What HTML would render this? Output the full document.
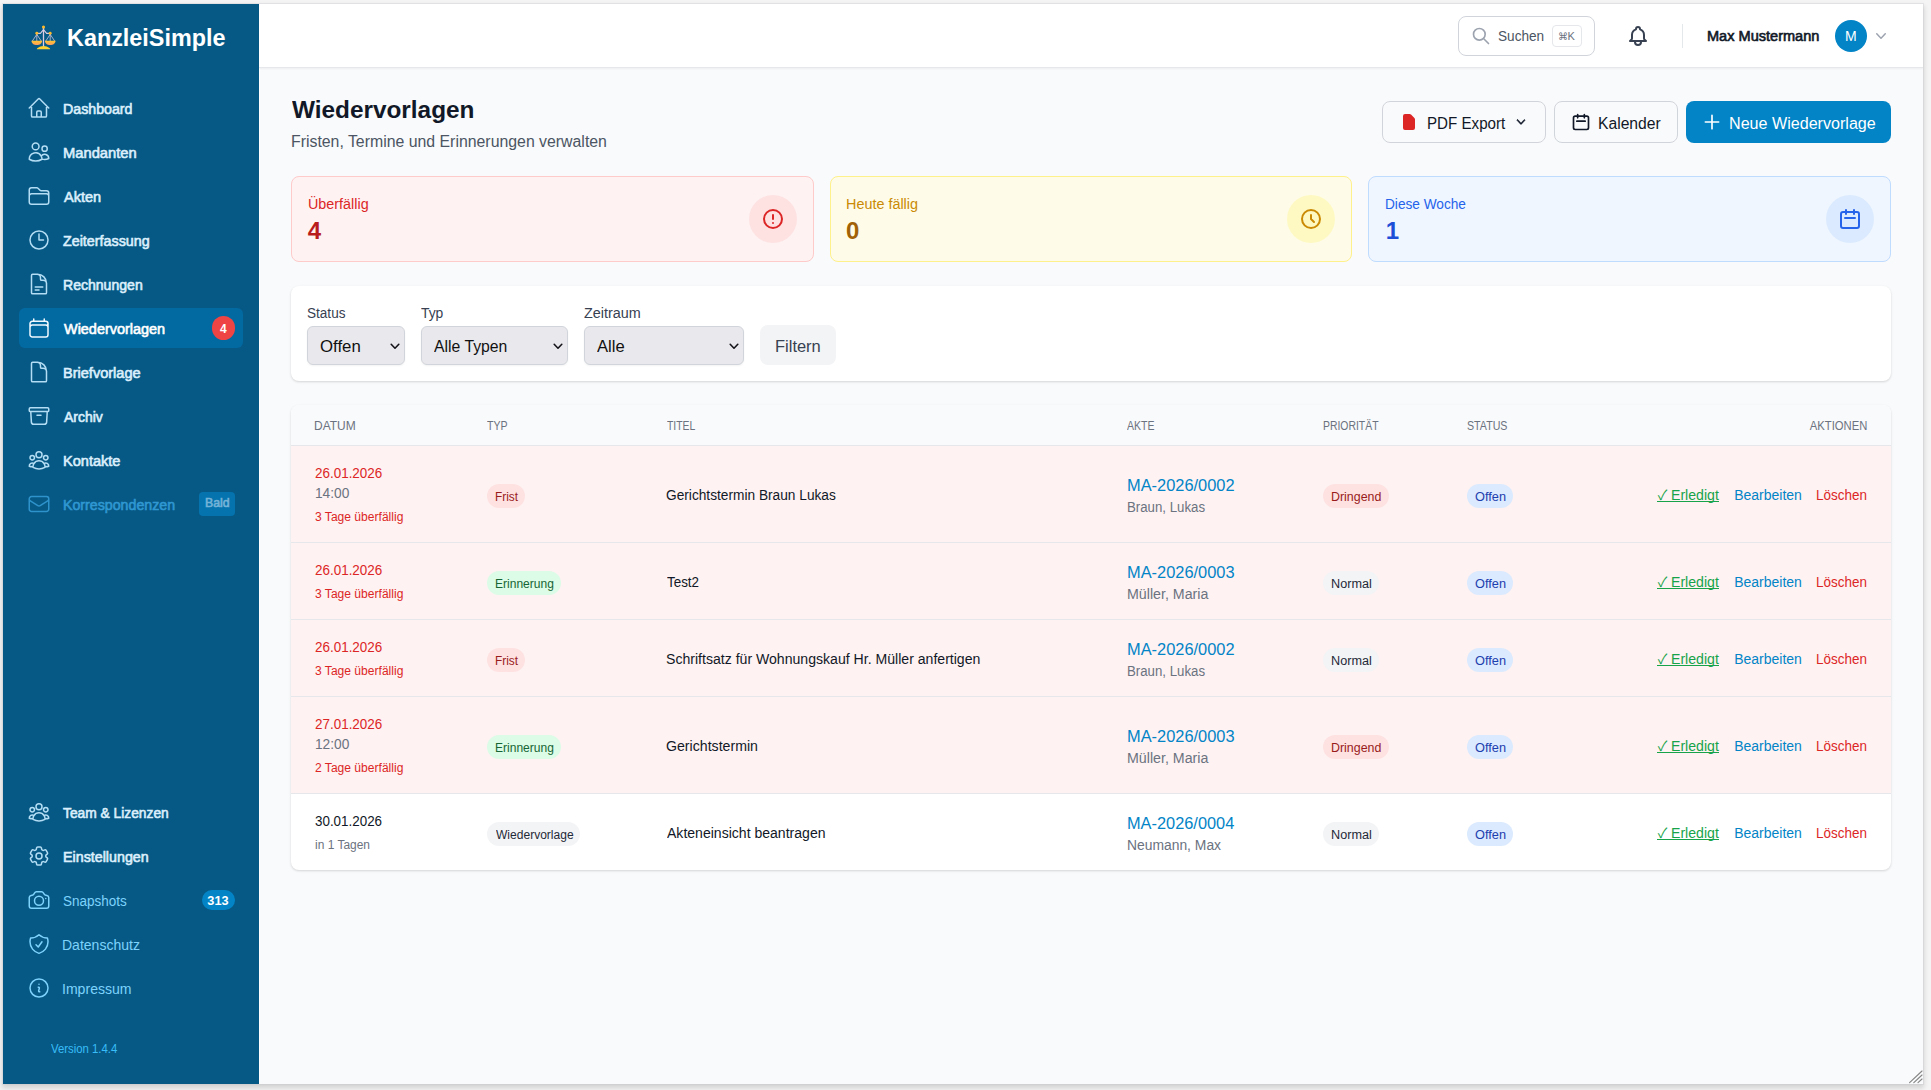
<!DOCTYPE html>
<html lang="de"><head><meta charset="utf-8"><title>Wiedervorlagen – KanzleiSimple</title>
<style>
*{box-sizing:border-box;margin:0;padding:0}
html,body{width:1931px;height:1090px;overflow:hidden}
body{background:#f4f4f4;font-family:"Liberation Sans",Arial,sans-serif;position:relative}
#frame{position:absolute;left:3px;top:4px;width:1920px;height:1080px;background:#f9fafb;overflow:hidden;
  box-shadow:0 0 0 1px rgba(200,200,205,.35),0 3px 5px 1px rgba(0,0,0,.14)}
#frame div,#frame span,#frame svg,#frame aside,#frame header,#frame main,#frame a,#frame nav,#frame section,#frame kbd{position:absolute}
.t{white-space:nowrap;display:block}
.ic{display:block;overflow:visible}
aside{background:#075985}
header{background:#fff;border-bottom:1px solid #e5e7eb;box-shadow:0 1px 2px rgba(0,0,0,.05)}
.card{border-radius:8px}
.white{background:#fff;box-shadow:0 1px 3px rgba(0,0,0,.1),0 1px 2px rgba(0,0,0,.06)}
.badge{border-radius:9999px}
.sel{background:#e9e9ed;border:1px solid #d1d5db;border-radius:6px;box-shadow:0 1px 2px rgba(0,0,0,.05)}
.btn{border-radius:8px}
kbd{font-family:inherit}
a{color:inherit;text-decoration:none}
</style></head>
<body>
<div id="frame">
<aside style="left:0;top:0;width:256px;height:1080px"></aside>
<div style="left:256px;top:0;width:1px;height:1080px;background:#fff"></div>
<nav><svg class="ic" style="left:23px;top:16px" width="36" height="34" viewBox="26 20 36 34"><defs><linearGradient id="pan" x1="0" y1="0" x2="0" y2="1"><stop offset="0" stop-color="#fdc82c"/><stop offset="1" stop-color="#fd9a62"/></linearGradient></defs><g stroke="#dccbe2" stroke-linecap="round" stroke-linejoin="round" fill="none"><path d="M43.5 28.2V46" stroke-width="1.3"/><path d="M37.6 33.4H40.4L43.5 29.6 46.6 33.4H49.4" stroke-width="1.1"/><path d="M36.8 34.4 32.5 40.8M36.8 34.4V40.8M36.8 34.4 41.1 40.8M50.2 34.4 45.9 40.8M50.2 34.4V40.8M50.2 34.4 54.5 40.8" stroke-width=".8" stroke="#cfc3dc"/></g><circle cx="43.5" cy="27" r="1.55" fill="#fdb92a"/><circle cx="36.8" cy="33.3" r="1.45" fill="#fdb92a"/><circle cx="50.2" cy="33.3" r="1.45" fill="#fdb92a"/><path d="M31.5 40.7h10.6c0 2.6-2.4 4.4-5.3 4.4s-5.3-1.8-5.3-4.4Z" fill="url(#pan)"/><path d="M44.9 40.7h10.6c0 2.6-2.4 4.4-5.3 4.4s-5.3-1.8-5.3-4.4Z" fill="url(#pan)"/><path d="M36.8 49.3c0-.5.3-.9.8-1.2 1.700-1.400 3.600-2.200 5.900-2.200s4.200.8 5.900 2.200c.5.3.8.7.8 1.200Z" fill="#fdd12f"/></svg>
<span id="t1" class="t" style="top:18.00px;font-size:24px;line-height:32px;color:#ffffff;font-weight:700;left:64.04px;transform:scaleX(0.9738);transform-origin:0 50%;">KanzleiSimple</span>
<svg class="ic" style="left:24px;top:92px;color:#b3ddf4;" width="24" height="24" viewBox="0 0 24 24" fill="none" stroke="currentColor" stroke-width="1.5" stroke-linecap="round" stroke-linejoin="round"><path d="m2.25 12 8.954-8.955c.44-.439 1.152-.439 1.591 0L21.75 12M4.5 9.75v10.125c0 .621.504 1.125 1.125 1.125H9.75v-4.875c0-.621.504-1.125 1.125-1.125h2.25c.621 0 1.125.504 1.125 1.125V21h4.125c.621 0 1.125-.504 1.125-1.125V9.75M8.25 21h8.25"/></svg>
<span id="t2" class="t" style="top:95.00px;font-size:14px;line-height:20px;color:#dbeffc;-webkit-text-stroke:.6px;left:59.64px;transform:scaleX(1.0141);transform-origin:0 50%;">Dashboard</span>
<svg class="ic" style="left:24px;top:136px;color:#b3ddf4;" width="24" height="24" viewBox="0 0 24 24" fill="none" stroke="currentColor" stroke-width="1.5" stroke-linecap="round" stroke-linejoin="round"><path d="M15 19.128a9.38 9.38 0 0 0 2.625.372 9.337 9.337 0 0 0 4.121-.952 4.125 4.125 0 0 0-7.533-2.493M15 19.128v-.003c0-1.113-.285-2.16-.786-3.07M15 19.128v.106A12.318 12.318 0 0 1 8.624 21c-2.331 0-4.512-.645-6.374-1.766l-.001-.109a6.375 6.375 0 0 1 11.964-3.07M12 6.375a3.375 3.375 0 1 1-6.75 0 3.375 3.375 0 0 1 6.75 0Zm8.25 2.25a2.625 2.625 0 1 1-5.25 0 2.625 2.625 0 0 1 5.25 0Z"/></svg>
<span id="t3" class="t" style="top:139.00px;font-size:14px;line-height:20px;color:#dbeffc;-webkit-text-stroke:.6px;left:59.61px;transform:scaleX(1.0516);transform-origin:0 50%;">Mandanten</span>
<svg class="ic" style="left:24px;top:180px;color:#b3ddf4;" width="24" height="24" viewBox="0 0 24 24" fill="none" stroke="currentColor" stroke-width="1.5" stroke-linecap="round" stroke-linejoin="round"><path d="M2.25 12.75V12A2.25 2.25 0 0 1 4.5 9.75h15A2.25 2.25 0 0 1 21.75 12v.75m-8.69-6.44-2.12-2.12a1.5 1.5 0 0 0-1.061-.44H4.5A2.25 2.25 0 0 0 2.25 6v12a2.25 2.25 0 0 0 2.25 2.25h15A2.25 2.25 0 0 0 21.75 18V9a2.25 2.25 0 0 0-2.25-2.25h-5.379a1.5 1.5 0 0 1-1.06-.44Z"/></svg>
<span id="t4" class="t" style="top:183.00px;font-size:14px;line-height:20px;color:#dbeffc;-webkit-text-stroke:.6px;left:60.66px;transform:scaleX(1.0366);transform-origin:0 50%;">Akten</span>
<svg class="ic" style="left:24px;top:224px;color:#b3ddf4;" width="24" height="24" viewBox="0 0 24 24" fill="none" stroke="currentColor" stroke-width="1.5" stroke-linecap="round" stroke-linejoin="round"><path d="M12 6v6h4.5m4.5 0a9 9 0 1 1-18 0 9 9 0 0 1 18 0Z"/></svg>
<span id="t5" class="t" style="top:227.00px;font-size:14px;line-height:20px;color:#dbeffc;-webkit-text-stroke:.6px;left:60.14px;transform:scaleX(1.0214);transform-origin:0 50%;">Zeiterfassung</span>
<svg class="ic" style="left:24px;top:268px;color:#b3ddf4;" width="24" height="24" viewBox="0 0 24 24" fill="none" stroke="currentColor" stroke-width="1.5" stroke-linecap="round" stroke-linejoin="round"><path d="M19.5 14.25v-2.625a3.375 3.375 0 0 0-3.375-3.375h-1.5A1.125 1.125 0 0 1 13.5 7.125v-1.5a3.375 3.375 0 0 0-3.375-3.375H8.25m0 12.75h7.5m-7.5 3H12M10.5 2.25H5.625c-.621 0-1.125.504-1.125 1.125v17.25c0 .621.504 1.125 1.125 1.125h12.75c.621 0 1.125-.504 1.125-1.125V11.25a9 9 0 0 0-9-9Z"/></svg>
<span id="t6" class="t" style="top:271.00px;font-size:14px;line-height:20px;color:#dbeffc;-webkit-text-stroke:.6px;left:59.65px;transform:scaleX(1.0038);transform-origin:0 50%;">Rechnungen</span>
<div style="left:16px;top:304px;width:224px;height:40px;background:#0369a1;border-radius:6px"></div>
<svg class="ic" style="left:24px;top:312px;color:#f0f9ff;" width="24" height="24" viewBox="0 0 24 24" fill="none" stroke="currentColor" stroke-width="1.5" stroke-linecap="round" stroke-linejoin="round"><path d="M6.75 3v2.25M17.25 3v2.25M3 18.75V7.5a2.25 2.25 0 0 1 2.25-2.25h13.5A2.25 2.25 0 0 1 21 7.5v11.25m-18 0A2.25 2.25 0 0 0 5.25 21h13.5A2.25 2.25 0 0 0 21 18.75m-18 0v-7.5A2.25 2.25 0 0 1 5.25 9h13.5A2.25 2.25 0 0 1 21 11.25v7.5"/></svg>
<span id="t7" class="t" style="top:315.00px;font-size:14px;line-height:20px;color:#ffffff;-webkit-text-stroke:.6px;left:60.66px;transform:scaleX(1.0312);transform-origin:0 50%;">Wiedervorlagen</span>
<svg class="ic" style="left:24px;top:356px;color:#b3ddf4;" width="24" height="24" viewBox="0 0 24 24" fill="none" stroke="currentColor" stroke-width="1.5" stroke-linecap="round" stroke-linejoin="round"><path d="M19.5 14.25v-2.625a3.375 3.375 0 0 0-3.375-3.375h-1.5A1.125 1.125 0 0 1 13.5 7.125v-1.5a3.375 3.375 0 0 0-3.375-3.375H8.25m2.25 0H5.625c-.621 0-1.125.504-1.125 1.125v17.25c0 .621.504 1.125 1.125 1.125h12.75c.621 0 1.125-.504 1.125-1.125V11.25a9 9 0 0 0-9-9Z"/></svg>
<span id="t8" class="t" style="top:359.00px;font-size:14px;line-height:20px;color:#dbeffc;-webkit-text-stroke:.6px;left:59.62px;transform:scaleX(1.0386);transform-origin:0 50%;">Briefvorlage</span>
<svg class="ic" style="left:24px;top:400px;color:#b3ddf4;" width="24" height="24" viewBox="0 0 24 24" fill="none" stroke="currentColor" stroke-width="1.5" stroke-linecap="round" stroke-linejoin="round"><path d="m20.25 7.5-.625 10.632a2.25 2.25 0 0 1-2.247 2.118H6.622a2.25 2.25 0 0 1-2.247-2.118L3.75 7.5M10 11.25h4M3.375 7.5h17.25c.621 0 1.125-.504 1.125-1.125v-1.5c0-.621-.504-1.125-1.125-1.125H3.375c-.621 0-1.125.504-1.125 1.125v1.5c0 .621.504 1.125 1.125 1.125Z"/></svg>
<span id="t9" class="t" style="top:403.00px;font-size:14px;line-height:20px;color:#dbeffc;-webkit-text-stroke:.6px;left:60.65px;transform:scaleX(0.9949);transform-origin:0 50%;">Archiv</span>
<svg class="ic" style="left:24px;top:444px;color:#b3ddf4;" width="24" height="24" viewBox="0 0 24 24" fill="none" stroke="currentColor" stroke-width="1.5" stroke-linecap="round" stroke-linejoin="round"><path d="M18 18.72a9.094 9.094 0 0 0 3.741-.479 3 3 0 0 0-4.682-2.72m.94 3.198.001.031c0 .225-.012.447-.037.666A11.944 11.944 0 0 1 12 21c-2.17 0-4.207-.576-5.963-1.584A6.062 6.062 0 0 1 6 18.719m12 0a5.971 5.971 0 0 0-.941-3.197m0 0A5.995 5.995 0 0 0 12 12.75a5.995 5.995 0 0 0-5.058 2.772m0 0a3 3 0 0 0-4.681 2.72 8.986 8.986 0 0 0 3.74.477m.94-3.197a5.971 5.971 0 0 0-.94 3.197M15 6.75a3 3 0 1 1-6 0 3 3 0 0 1 6 0Zm6 3a2.25 2.25 0 1 1-4.5 0 2.25 2.25 0 0 1 4.5 0Zm-13.5 0a2.25 2.25 0 1 1-4.5 0 2.25 2.25 0 0 1 4.5 0Z"/></svg>
<span id="t10" class="t" style="top:447.00px;font-size:14px;line-height:20px;color:#dbeffc;-webkit-text-stroke:.6px;left:59.62px;transform:scaleX(1.0396);transform-origin:0 50%;">Kontakte</span>
<div class="badge" style="left:209px;top:312px;width:23px;height:24px;background:#ef4444"></div>
<span id="t11" class="t" style="top:317.00px;font-size:12px;line-height:16px;color:#ffffff;font-weight:700;left:220.34px;width:200px;margin-left:-100px;text-align:center;">4</span>
<svg class="ic" style="left:24px;top:488px;color:#2f93cb;" width="24" height="24" viewBox="0 0 24 24" fill="none" stroke="currentColor" stroke-width="1.5" stroke-linecap="round" stroke-linejoin="round"><path d="M21.75 6.75v10.5a2.25 2.25 0 0 1-2.25 2.25h-15a2.25 2.25 0 0 1-2.25-2.25V6.75m19.5 0A2.25 2.25 0 0 0 19.5 4.5h-15a2.25 2.25 0 0 0-2.25 2.25m19.5 0v.243a2.25 2.25 0 0 1-1.07 1.916l-7.5 4.615a2.25 2.25 0 0 1-2.36 0L3.32 8.91a2.25 2.25 0 0 1-1.07-1.916V6.75"/></svg>
<span id="t12" class="t" style="top:491.00px;font-size:14px;line-height:20px;color:#2f97d1;-webkit-text-stroke:.6px;left:59.84px;transform:scaleX(1.0142);transform-origin:0 50%;">Korrespondenzen</span>
<div style="left:196px;top:488px;width:36px;height:24px;background:#0573ae;border-radius:4px"></div>
<span id="t13" class="t" style="top:491.00px;font-size:12px;line-height:16px;color:#74b3d8;-webkit-text-stroke:.6px;left:201.73px;transform:scaleX(1.0242);transform-origin:0 50%;">Bald</span>
<svg class="ic" style="left:24px;top:796px;color:#b3ddf4;" width="24" height="24" viewBox="0 0 24 24" fill="none" stroke="currentColor" stroke-width="1.5" stroke-linecap="round" stroke-linejoin="round"><path d="M18 18.72a9.094 9.094 0 0 0 3.741-.479 3 3 0 0 0-4.682-2.72m.94 3.198.001.031c0 .225-.012.447-.037.666A11.944 11.944 0 0 1 12 21c-2.17 0-4.207-.576-5.963-1.584A6.062 6.062 0 0 1 6 18.719m12 0a5.971 5.971 0 0 0-.941-3.197m0 0A5.995 5.995 0 0 0 12 12.75a5.995 5.995 0 0 0-5.058 2.772m0 0a3 3 0 0 0-4.681 2.72 8.986 8.986 0 0 0 3.74.477m.94-3.197a5.971 5.971 0 0 0-.94 3.197M15 6.75a3 3 0 1 1-6 0 3 3 0 0 1 6 0Zm6 3a2.25 2.25 0 1 1-4.5 0 2.25 2.25 0 0 1 4.5 0Zm-13.5 0a2.25 2.25 0 1 1-4.5 0 2.25 2.25 0 0 1 4.5 0Z"/></svg>
<span id="t14" class="t" style="top:799.00px;font-size:14px;line-height:20px;color:#dbeffc;-webkit-text-stroke:.6px;left:60.40px;transform:scaleX(0.9845);transform-origin:0 50%;">Team &amp; Lizenzen</span>
<svg class="ic" style="left:24px;top:840px;color:#b3ddf4;" width="24" height="24" viewBox="0 0 24 24" fill="none" stroke="currentColor" stroke-width="1.5" stroke-linecap="round" stroke-linejoin="round"><path d="M9.594 3.94c.09-.542.56-.94 1.11-.94h2.593c.55 0 1.02.398 1.11.94l.213 1.281c.063.374.313.686.645.87.074.04.147.083.22.127.325.196.72.257 1.075.124l1.217-.456a1.125 1.125 0 0 1 1.37.49l1.296 2.247a1.125 1.125 0 0 1-.26 1.431l-1.003.827c-.293.241-.438.613-.43.992a7.723 7.723 0 0 1 0 .255c-.008.378.137.75.43.991l1.004.827c.424.35.534.955.26 1.43l-1.298 2.247a1.125 1.125 0 0 1-1.369.491l-1.217-.456c-.355-.133-.75-.072-1.076.124a6.47 6.47 0 0 1-.22.128c-.331.183-.581.495-.644.869l-.213 1.281c-.09.543-.56.94-1.11.94h-2.594c-.55 0-1.019-.398-1.11-.94l-.213-1.281c-.062-.374-.312-.686-.644-.87a6.52 6.52 0 0 1-.22-.127c-.325-.196-.72-.257-1.076-.124l-1.217.456a1.125 1.125 0 0 1-1.369-.49l-1.297-2.247a1.125 1.125 0 0 1 .26-1.431l1.004-.827c.292-.24.437-.613.43-.991a6.932 6.932 0 0 1 0-.255c.007-.38-.138-.751-.43-.992l-1.004-.827a1.125 1.125 0 0 1-.26-1.43l1.297-2.247a1.125 1.125 0 0 1 1.37-.491l1.216.456c.356.133.751.072 1.076-.124.072-.044.146-.086.22-.128.332-.183.582-.495.644-.869l.214-1.28Z"/><path d="M15 12a3 3 0 1 1-6 0 3 3 0 0 1 6 0Z"/></svg>
<span id="t15" class="t" style="top:843.00px;font-size:14px;line-height:20px;color:#dbeffc;-webkit-text-stroke:.6px;left:59.64px;transform:scaleX(1.0199);transform-origin:0 50%;">Einstellungen</span>
<svg class="ic" style="left:24px;top:884px;color:#7dd3fc;" width="24" height="24" viewBox="0 0 24 24" fill="none" stroke="currentColor" stroke-width="1.5" stroke-linecap="round" stroke-linejoin="round"><path d="M6.827 6.175A2.31 2.31 0 0 1 5.186 7.23c-.38.054-.757.112-1.134.175C2.999 7.58 2.25 8.507 2.25 9.574V18a2.25 2.25 0 0 0 2.25 2.25h15A2.25 2.25 0 0 0 21.75 18V9.574c0-1.067-.75-1.994-1.802-2.169a47.865 47.865 0 0 0-1.134-.175 2.31 2.31 0 0 1-1.64-1.055l-.822-1.316a2.192 2.192 0 0 0-1.736-1.039 48.774 48.774 0 0 0-5.232 0 2.192 2.192 0 0 0-1.736 1.039l-.821 1.316Z"/><path d="M16.5 12.75a4.5 4.5 0 1 1-9 0 4.5 4.5 0 0 1 9 0ZM18.75 10.5h.008v.008h-.008V10.5Z"/></svg>
<span id="t16" class="t" style="top:887.00px;font-size:14px;line-height:20px;color:#7dd3fc;left:59.68px;transform:scaleX(0.9631);transform-origin:0 50%;">Snapshots</span>
<svg class="ic" style="left:24px;top:928px;color:#7dd3fc;" width="24" height="24" viewBox="0 0 24 24" fill="none" stroke="currentColor" stroke-width="1.5" stroke-linecap="round" stroke-linejoin="round"><path d="M9 12.75 11.25 15 15 9.75m-3-7.036A11.959 11.959 0 0 1 3.598 6 11.99 11.99 0 0 0 3 9.749c0 5.592 3.824 10.29 9 11.623 5.176-1.332 9-6.03 9-11.622 0-1.31-.21-2.571-.598-3.751h-.152c-3.196 0-6.1-1.248-8.25-3.285Z"/></svg>
<span id="t17" class="t" style="top:931.00px;font-size:14px;line-height:20px;color:#7dd3fc;left:59.15px;transform:scaleX(1.0013);transform-origin:0 50%;">Datenschutz</span>
<svg class="ic" style="left:24px;top:972px;color:#7dd3fc;" width="24" height="24" viewBox="0 0 24 24" fill="none" stroke="currentColor" stroke-width="1.5" stroke-linecap="round" stroke-linejoin="round"><path d="m11.25 11.25.041-.02a.75.75 0 0 1 1.063.852l-.708 2.836a.75.75 0 0 0 1.063.853l.041-.021M21 12a9 9 0 1 1-18 0 9 9 0 0 1 18 0Zm-9-3.75h.008v.008H12V8.25Z"/></svg>
<span id="t18" class="t" style="top:975.00px;font-size:14px;line-height:20px;color:#7dd3fc;left:59.14px;transform:scaleX(1.0045);transform-origin:0 50%;">Impressum</span>
<div class="badge" style="left:199px;top:886px;width:33px;height:20px;background:#0284c7"></div>
<span id="t19" class="t" style="top:889.00px;font-size:12px;line-height:16px;color:#ffffff;font-weight:700;left:215.32px;width:200px;margin-left:-100px;text-align:center;transform:scaleX(1.0615);transform-origin:50% 50%;">313</span>
<span id="t20" class="t" style="top:1037.00px;font-size:12px;line-height:16px;color:#38bdf8;left:48.40px;transform:scaleX(0.9462);transform-origin:0 50%;">Version 1.4.4</span></nav>
<header style="left:256px;top:0;width:1664px;height:64px"></header>
<div style="left:1455px;top:12px;width:137px;height:40px;border:1px solid #d1d5db;border-radius:8px;background:#fff"></div>
<svg class="ic" style="left:1468px;top:22px;color:#9ca3af;" width="20" height="20" viewBox="0 0 24 24" fill="none" stroke="currentColor" stroke-width="2" stroke-linecap="round" stroke-linejoin="round"><path d="M21 21l-6-6m2-5a7 7 0 11-14 0 7 7 0 0114 0z"/></svg>
<span id="t21" class="t" style="top:22.00px;font-size:14px;line-height:20px;color:#4b5563;left:1494.67px;transform:scaleX(0.9727);transform-origin:0 50%;">Suchen</span>
<div style="left:1549px;top:21px;width:30px;height:22px;border:1px solid #e5e7eb;border-radius:4px;background:#fff"></div>
<kbd><span id="t22" class="t" style="top:24.83px;font-size:10px;line-height:16px;color:#6b7280;left:1555.05px;font-family:'DejaVu Sans',sans-serif;">⌘</span><span id="t23" class="t" style="top:24.00px;font-size:11px;line-height:16px;color:#6b7280;left:1564.60px;">K</span></kbd>
<svg class="ic" style="left:1623px;top:20px;color:#374151;" width="24" height="24" viewBox="0 0 24 24" fill="none" stroke="currentColor" stroke-width="2" stroke-linecap="round" stroke-linejoin="round"><path d="M15 17h5l-1.405-1.405A2.032 2.032 0 0118 14.158V11a6.002 6.002 0 00-4-5.659V5a2 2 0 10-4 0v.341C7.67 6.165 6 8.388 6 11v3.159c0 .538-.214 1.055-.595 1.436L4 17h5m6 0v1a3 3 0 11-6 0v-1m6 0H9"/></svg>
<div style="left:1679px;top:20px;width:1px;height:24px;background:#e5e7eb"></div>
<span id="t24" class="t" style="top:22.00px;font-size:14px;line-height:20px;color:#111827;-webkit-text-stroke:.6px;left:1703.92px;transform:scaleX(1.0389);transform-origin:0 50%;">Max Mustermann</span>
<div class="badge" style="left:1832px;top:16px;width:32px;height:32px;background:#0284c7"></div>
<span id="t25" class="t" style="top:22.00px;font-size:14px;line-height:20px;color:#ffffff;left:1847.96px;width:200px;margin-left:-100px;text-align:center;">M</span>
<svg class="ic" style="left:1868px;top:22px;" width="20" height="20" viewBox="0 0 20 20" fill="#9ca3af" stroke="none" stroke-width="1.5" stroke-linecap="round" stroke-linejoin="round"><path fill-rule="evenodd" clip-rule="evenodd" d="M5.23 7.21a.75.75 0 011.06.02L10 11.168l3.71-3.938a.75.75 0 111.08 1.04l-4.25 4.5a.75.75 0 01-1.08 0l-4.25-4.5a.75.75 0 01.02-1.06z"/></svg>
<main><span id="t26" class="t" style="top:90.00px;font-size:24px;line-height:32px;color:#111827;font-weight:700;left:288.50px;transform:scaleX(1.0143);transform-origin:0 50%;">Wiedervorlagen</span>
<span id="t27" class="t" style="top:126.00px;font-size:16px;line-height:24px;color:#4b5563;left:287.76px;transform:scaleX(0.9904);transform-origin:0 50%;">Fristen, Termine und Erinnerungen verwalten</span>
<div class="btn" style="left:1379px;top:97px;width:164px;height:42px;border:1px solid #d1d5db"></div>
<svg class="ic" style="left:1396px;top:108px;" width="20" height="20" viewBox="0 0 20 20" fill="#dc2626" stroke="none" stroke-width="1.5" stroke-linecap="round" stroke-linejoin="round"><path fill-rule="evenodd" clip-rule="evenodd" d="M4 4a2 2 0 012-2h4.586A2 2 0 0112 2.586L15.414 6A2 2 0 0116 7.414V16a2 2 0 01-2 2H6a2 2 0 01-2-2V4z"/></svg>
<span id="t28" class="t" style="top:108.00px;font-size:16px;line-height:24px;color:#111827;left:1423.92px;transform:scaleX(0.9465);transform-origin:0 50%;">PDF Export</span>
<svg class="ic" style="left:1510px;top:110px;" width="16" height="16" viewBox="0 0 20 20" fill="#111827" stroke="#111827" stroke-width="0.6" stroke-linecap="round" stroke-linejoin="round"><path fill-rule="evenodd" clip-rule="evenodd" d="M5.23 7.21a.75.75 0 011.06.02L10 11.168l3.71-3.938a.75.75 0 111.08 1.04l-4.25 4.5a.75.75 0 01-1.08 0l-4.25-4.5a.75.75 0 01.02-1.06z"/></svg>
<div class="btn" style="left:1551px;top:97px;width:124px;height:42px;border:1px solid #d1d5db"></div>
<svg class="ic" style="left:1568px;top:108px;color:#111827;" width="20" height="20" viewBox="0 0 24 24" fill="none" stroke="currentColor" stroke-width="2" stroke-linecap="round" stroke-linejoin="round"><path d="M8 7V3m8 4V3m-9 8h10M5 21h14a2 2 0 002-2V7a2 2 0 00-2-2H5a2 2 0 00-2 2v12a2 2 0 002 2z"/></svg>
<span id="t29" class="t" style="top:108.00px;font-size:16px;line-height:24px;color:#111827;left:1595.08px;transform:scaleX(0.9792);transform-origin:0 50%;">Kalender</span>
<div class="btn" style="left:1683px;top:97px;width:205px;height:42px;background:#0284c7"></div>
<svg class="ic" style="left:1699px;top:108px;color:#ffffff;" width="20" height="20" viewBox="0 0 24 24" fill="none" stroke="currentColor" stroke-width="2" stroke-linecap="round" stroke-linejoin="round"><path d="M12 4v16m8-8H4"/></svg>
<span id="t30" class="t" style="top:108.00px;font-size:16px;line-height:24px;color:#ffffff;left:1726.14px;transform:scaleX(1.0062);transform-origin:0 50%;">Neue Wiedervorlage</span>
<div class="card" style="left:288px;top:172px;width:522.67px;height:86px;background:#fef2f2;border:1px solid #fecaca"></div>
<span id="t31" class="t" style="top:190.00px;font-size:14px;line-height:20px;color:#dc2626;left:304.57px;transform:scaleX(1.0253);transform-origin:0 50%;">Überfällig</span>
<span id="t32" class="t" style="top:211.00px;font-size:24px;line-height:32px;color:#b91c1c;font-weight:700;left:304.75px;">4</span>
<div class="badge" style="left:745.67px;top:191px;width:48px;height:48px;background:#fee2e2"></div>
<svg class="ic" style="left:757.67px;top:203px;color:#dc2626;" width="24" height="24" viewBox="0 0 24 24" fill="none" stroke="currentColor" stroke-width="2" stroke-linecap="round" stroke-linejoin="round"><path d="M12 8v4m0 4h.01M21 12a9 9 0 11-18 0 9 9 0 0118 0z"/></svg>
<div class="card" style="left:826.67px;top:172px;width:522.66px;height:86px;background:#fefce8;border:1px solid #fef08a"></div>
<span id="t33" class="t" style="top:190.00px;font-size:14px;line-height:20px;color:#ca8a04;left:843.12px;transform:scaleX(1.0279);transform-origin:0 50%;">Heute fällig</span>
<span id="t34" class="t" style="top:211.00px;font-size:24px;line-height:32px;color:#a16207;font-weight:700;left:843.00px;">0</span>
<div class="badge" style="left:1284.33px;top:191px;width:48px;height:48px;background:#fef9c3"></div>
<svg class="ic" style="left:1296.33px;top:203px;color:#ca8a04;" width="24" height="24" viewBox="0 0 24 24" fill="none" stroke="currentColor" stroke-width="2" stroke-linecap="round" stroke-linejoin="round"><path d="M12 8v4l3 3m6-3a9 9 0 11-18 0 9 9 0 0118 0z"/></svg>
<div class="card" style="left:1365.33px;top:172px;width:522.67px;height:86px;background:#eff6ff;border:1px solid #bfdbfe"></div>
<span id="t35" class="t" style="top:190.00px;font-size:14px;line-height:20px;color:#2563eb;left:1381.98px;transform:scaleX(0.9753);transform-origin:0 50%;">Diese Woche</span>
<span id="t36" class="t" style="top:211.00px;font-size:24px;line-height:32px;color:#1d4ed8;font-weight:700;left:1382.80px;">1</span>
<div class="badge" style="left:1823px;top:191px;width:48px;height:48px;background:#dbeafe"></div>
<svg class="ic" style="left:1835px;top:203px;color:#2563eb;" width="24" height="24" viewBox="0 0 24 24" fill="none" stroke="currentColor" stroke-width="2" stroke-linecap="round" stroke-linejoin="round"><path d="M8 7V3m8 4V3m-9 8h10M5 21h14a2 2 0 002-2V7a2 2 0 00-2-2H5a2 2 0 00-2 2v12a2 2 0 002 2z"/></svg>
<div class="card white" style="left:288px;top:282px;width:1600px;height:95px;"></div>
<span id="t37" class="t" style="top:299.00px;font-size:14px;line-height:20px;color:#374151;left:303.57px;transform:scaleX(0.9688);transform-origin:0 50%;">Status</span>
<div class="sel" style="left:304px;top:322px;width:98px;height:39px;"></div>
<span id="t38" class="t" style="top:331.00px;font-size:16px;line-height:24px;color:#111111;left:316.51px;transform:scaleX(1.0486);transform-origin:0 50%;">Offen</span>
<svg class="ic" style="left:387px;top:339px" width="10" height="7" viewBox="0 0 10 7" fill="none" stroke="#15141a" stroke-width="1.6" stroke-linecap="round" stroke-linejoin="round"><path d="M1.2 1.3 5 5.2 8.8 1.3"/></svg>
<span id="t39" class="t" style="top:299.00px;font-size:14px;line-height:20px;color:#374151;left:418.05px;transform:scaleX(0.9885);transform-origin:0 50%;">Typ</span>
<div class="sel" style="left:418px;top:322px;width:147px;height:39px;"></div>
<span id="t40" class="t" style="top:331.00px;font-size:16px;line-height:24px;color:#111111;left:431.30px;transform:scaleX(0.9857);transform-origin:0 50%;">Alle Typen</span>
<svg class="ic" style="left:550px;top:339px" width="10" height="7" viewBox="0 0 10 7" fill="none" stroke="#15141a" stroke-width="1.6" stroke-linecap="round" stroke-linejoin="round"><path d="M1.2 1.3 5 5.2 8.8 1.3"/></svg>
<span id="t41" class="t" style="top:299.00px;font-size:14px;line-height:20px;color:#374151;left:580.79px;transform:scaleX(1.0288);transform-origin:0 50%;">Zeitraum</span>
<div class="sel" style="left:581px;top:322px;width:160px;height:39px;"></div>
<span id="t42" class="t" style="top:331.00px;font-size:16px;line-height:24px;color:#111111;left:594.30px;transform:scaleX(1.0385);transform-origin:0 50%;">Alle</span>
<svg class="ic" style="left:726px;top:339px" width="10" height="7" viewBox="0 0 10 7" fill="none" stroke="#15141a" stroke-width="1.6" stroke-linecap="round" stroke-linejoin="round"><path d="M1.2 1.3 5 5.2 8.8 1.3"/></svg>
<div class="btn" style="left:757px;top:321px;width:76px;height:40px;background:#f3f4f6"></div>
<span id="t43" class="t" style="top:331.00px;font-size:16px;line-height:24px;color:#374151;left:772.01px;transform:scaleX(1.0296);transform-origin:0 50%;">Filtern</span>
<section class="card white" style="left:288px;top:401px;width:1600px;height:465px;overflow:hidden"><div style="left:-288px;top:-401px;width:1920px;height:1080px"><div style="left:288px;top:401px;width:1600px;height:40px;background:#f9fafb"></div>
<div style="left:288px;top:441px;width:1600px;height:1px;background:#e5e7eb"></div>
<span id="t44" class="t" style="top:414.00px;font-size:12px;line-height:16px;color:#6b7280;left:311.20px;transform:scaleX(0.9962);transform-origin:0 50%;">DATUM</span>
<span id="t45" class="t" style="top:414.00px;font-size:12px;line-height:16px;color:#6b7280;left:484.28px;transform:scaleX(0.8800);transform-origin:0 50%;">TYP</span>
<span id="t46" class="t" style="top:414.00px;font-size:12px;line-height:16px;color:#6b7280;left:663.88px;transform:scaleX(0.8625);transform-origin:0 50%;">TITEL</span>
<span id="t47" class="t" style="top:414.00px;font-size:12px;line-height:16px;color:#6b7280;left:1124.00px;transform:scaleX(0.8748);transform-origin:0 50%;">AKTE</span>
<span id="t48" class="t" style="top:414.00px;font-size:12px;line-height:16px;color:#6b7280;left:1319.93px;transform:scaleX(0.8669);transform-origin:0 50%;">PRIORITÄT</span>
<span id="t49" class="t" style="top:414.00px;font-size:12px;line-height:16px;color:#6b7280;left:1464.36px;transform:scaleX(0.8876);transform-origin:0 50%;">STATUS</span>
<span id="t50" class="t" style="top:414.00px;font-size:12px;line-height:16px;color:#6b7280;right:55.71px;transform:scaleX(0.9372);transform-origin:100% 50%;">AKTIONEN</span>
<div style="left:288px;top:442px;width:1600px;height:96px;background:#fef2f2"></div>
<div style="left:288px;top:538px;width:1600px;height:1px;background:#e5e7eb"></div>
<span id="t51" class="t" style="top:459.00px;font-size:14px;line-height:20px;color:#dc2626;left:311.58px;transform:scaleX(0.9600);transform-origin:0 50%;">26.01.2026</span>
<span id="t52" class="t" style="top:479.00px;font-size:14px;line-height:20px;color:#6b7280;left:311.62px;transform:scaleX(0.9791);transform-origin:0 50%;">14:00</span>
<span id="t53" class="t" style="top:505.00px;font-size:12px;line-height:16px;color:#dc2626;left:311.80px;transform:scaleX(1.0058);transform-origin:0 50%;">3 Tage überfällig</span>
<div class="badge" style="left:484px;top:480px;width:38px;height:24px;background:#fee2e2"></div>
<span id="t54" class="t" style="top:485.00px;font-size:12px;line-height:16px;color:#991b1b;left:491.51px;transform:scaleX(0.9888);transform-origin:0 50%;">Frist</span>
<span id="t55" class="t" style="top:481.00px;font-size:14px;line-height:20px;color:#111827;left:663.37px;transform:scaleX(0.9788);transform-origin:0 50%;">Gerichtstermin Braun Lukas</span>
<span id="t56" class="t" style="top:470.00px;font-size:16px;line-height:24px;color:#0284c7;left:1123.52px;transform:scaleX(1.0243);transform-origin:0 50%;">MA-2026/0002</span>
<span id="t57" class="t" style="top:493.00px;font-size:14px;line-height:20px;color:#6b7280;left:1123.62px;transform:scaleX(0.9461);transform-origin:0 50%;">Braun, Lukas</span>
<div class="badge" style="left:1320px;top:480px;width:66px;height:24px;background:#fee2e2"></div>
<span id="t58" class="t" style="top:485.00px;font-size:12px;line-height:16px;color:#991b1b;left:1327.57px;transform:scaleX(1.0340);transform-origin:0 50%;">Dringend</span>
<div class="badge" style="left:1464px;top:480px;width:46px;height:24px;background:#dbeafe"></div>
<span id="t59" class="t" style="top:485.00px;font-size:12px;line-height:16px;color:#1e40af;left:1472.17px;transform:scaleX(1.0631);transform-origin:0 50%;">Offen</span>
<a><span id="t60" class="t chk" style="top:480.00px;font-size:14px;line-height:20px;color:#16a34a;left:1654.70px;font-family:'Noto Sans CJK JP','DejaVu Sans',sans-serif;">✓</span> <span id="t61" class="t" style="top:481.00px;font-size:14px;line-height:20px;color:#16a34a;left:1668.34px;transform:scaleX(1.0087);transform-origin:0 50%;">Erledigt</span><div style="left:1654px;top:497px;width:62px;height:1px;background:#16a34a"></div></a>
<span id="t62" class="t" style="top:481.00px;font-size:14px;line-height:20px;color:#0284c7;left:1731.15px;">Bearbeiten</span>
<span id="t63" class="t" style="top:481.00px;font-size:14px;line-height:20px;color:#dc2626;left:1813.40px;transform:scaleX(0.9616);transform-origin:0 50%;">Löschen</span>
<div style="left:288px;top:539px;width:1600px;height:76px;background:#fef2f2"></div>
<div style="left:288px;top:615px;width:1600px;height:1px;background:#e5e7eb"></div>
<span id="t64" class="t" style="top:556.00px;font-size:14px;line-height:20px;color:#dc2626;left:311.58px;transform:scaleX(0.9600);transform-origin:0 50%;">26.01.2026</span>
<span id="t65" class="t" style="top:582.00px;font-size:12px;line-height:16px;color:#dc2626;left:311.80px;transform:scaleX(1.0058);transform-origin:0 50%;">3 Tage überfällig</span>
<div class="badge" style="left:484px;top:567px;width:74px;height:24px;background:#dcfce7"></div>
<span id="t66" class="t" style="top:572.00px;font-size:12px;line-height:16px;color:#166534;left:491.50px;transform:scaleX(1.0035);transform-origin:0 50%;">Erinnerung</span>
<span id="t67" class="t" style="top:568.00px;font-size:14px;line-height:20px;color:#111827;left:663.86px;transform:scaleX(0.9569);transform-origin:0 50%;">Test2</span>
<span id="t68" class="t" style="top:557.00px;font-size:16px;line-height:24px;color:#0284c7;left:1123.52px;transform:scaleX(1.0243);transform-origin:0 50%;">MA-2026/0003</span>
<span id="t69" class="t" style="top:580.00px;font-size:14px;line-height:20px;color:#6b7280;left:1123.53px;transform:scaleX(1.0152);transform-origin:0 50%;">Müller, Maria</span>
<div class="badge" style="left:1320px;top:567px;width:56px;height:24px;background:#f3f4f6"></div>
<span id="t70" class="t" style="top:572.00px;font-size:12px;line-height:16px;color:#1f2937;left:1327.55px;transform:scaleX(1.0541);transform-origin:0 50%;">Normal</span>
<div class="badge" style="left:1464px;top:567px;width:46px;height:24px;background:#dbeafe"></div>
<span id="t71" class="t" style="top:572.00px;font-size:12px;line-height:16px;color:#1e40af;left:1472.17px;transform:scaleX(1.0631);transform-origin:0 50%;">Offen</span>
<a><span id="t72" class="t chk" style="top:567.00px;font-size:14px;line-height:20px;color:#16a34a;left:1654.70px;font-family:'Noto Sans CJK JP','DejaVu Sans',sans-serif;">✓</span> <span id="t73" class="t" style="top:568.00px;font-size:14px;line-height:20px;color:#16a34a;left:1668.34px;transform:scaleX(1.0087);transform-origin:0 50%;">Erledigt</span><div style="left:1654px;top:584px;width:62px;height:1px;background:#16a34a"></div></a>
<span id="t74" class="t" style="top:568.00px;font-size:14px;line-height:20px;color:#0284c7;left:1731.15px;">Bearbeiten</span>
<span id="t75" class="t" style="top:568.00px;font-size:14px;line-height:20px;color:#dc2626;left:1813.40px;transform:scaleX(0.9616);transform-origin:0 50%;">Löschen</span>
<div style="left:288px;top:616px;width:1600px;height:76px;background:#fef2f2"></div>
<div style="left:288px;top:692px;width:1600px;height:1px;background:#e5e7eb"></div>
<span id="t76" class="t" style="top:633.00px;font-size:14px;line-height:20px;color:#dc2626;left:311.58px;transform:scaleX(0.9600);transform-origin:0 50%;">26.01.2026</span>
<span id="t77" class="t" style="top:659.00px;font-size:12px;line-height:16px;color:#dc2626;left:311.80px;transform:scaleX(1.0058);transform-origin:0 50%;">3 Tage überfällig</span>
<div class="badge" style="left:484px;top:644px;width:38px;height:24px;background:#fee2e2"></div>
<span id="t78" class="t" style="top:649.00px;font-size:12px;line-height:16px;color:#991b1b;left:491.51px;transform:scaleX(0.9888);transform-origin:0 50%;">Frist</span>
<span id="t79" class="t" style="top:645.00px;font-size:14px;line-height:20px;color:#111827;left:663.35px;transform:scaleX(1.0058);transform-origin:0 50%;">Schriftsatz für Wohnungskauf Hr. Müller anfertigen</span>
<span id="t80" class="t" style="top:634.00px;font-size:16px;line-height:24px;color:#0284c7;left:1123.52px;transform:scaleX(1.0243);transform-origin:0 50%;">MA-2026/0002</span>
<span id="t81" class="t" style="top:657.00px;font-size:14px;line-height:20px;color:#6b7280;left:1123.62px;transform:scaleX(0.9461);transform-origin:0 50%;">Braun, Lukas</span>
<div class="badge" style="left:1320px;top:644px;width:56px;height:24px;background:#f3f4f6"></div>
<span id="t82" class="t" style="top:649.00px;font-size:12px;line-height:16px;color:#1f2937;left:1327.55px;transform:scaleX(1.0541);transform-origin:0 50%;">Normal</span>
<div class="badge" style="left:1464px;top:644px;width:46px;height:24px;background:#dbeafe"></div>
<span id="t83" class="t" style="top:649.00px;font-size:12px;line-height:16px;color:#1e40af;left:1472.17px;transform:scaleX(1.0631);transform-origin:0 50%;">Offen</span>
<a><span id="t84" class="t chk" style="top:644.00px;font-size:14px;line-height:20px;color:#16a34a;left:1654.70px;font-family:'Noto Sans CJK JP','DejaVu Sans',sans-serif;">✓</span> <span id="t85" class="t" style="top:645.00px;font-size:14px;line-height:20px;color:#16a34a;left:1668.34px;transform:scaleX(1.0087);transform-origin:0 50%;">Erledigt</span><div style="left:1654px;top:661px;width:62px;height:1px;background:#16a34a"></div></a>
<span id="t86" class="t" style="top:645.00px;font-size:14px;line-height:20px;color:#0284c7;left:1731.15px;">Bearbeiten</span>
<span id="t87" class="t" style="top:645.00px;font-size:14px;line-height:20px;color:#dc2626;left:1813.40px;transform:scaleX(0.9616);transform-origin:0 50%;">Löschen</span>
<div style="left:288px;top:693px;width:1600px;height:96px;background:#fef2f2"></div>
<div style="left:288px;top:789px;width:1600px;height:1px;background:#e5e7eb"></div>
<span id="t88" class="t" style="top:710.00px;font-size:14px;line-height:20px;color:#dc2626;left:311.58px;transform:scaleX(0.9600);transform-origin:0 50%;">27.01.2026</span>
<span id="t89" class="t" style="top:730.00px;font-size:14px;line-height:20px;color:#6b7280;left:311.62px;transform:scaleX(0.9791);transform-origin:0 50%;">12:00</span>
<span id="t90" class="t" style="top:756.00px;font-size:12px;line-height:16px;color:#dc2626;left:311.80px;transform:scaleX(1.0058);transform-origin:0 50%;">2 Tage überfällig</span>
<div class="badge" style="left:484px;top:731px;width:74px;height:24px;background:#dcfce7"></div>
<span id="t91" class="t" style="top:736.00px;font-size:12px;line-height:16px;color:#166534;left:491.50px;transform:scaleX(1.0035);transform-origin:0 50%;">Erinnerung</span>
<span id="t92" class="t" style="top:732.00px;font-size:14px;line-height:20px;color:#111827;left:663.34px;transform:scaleX(1.0101);transform-origin:0 50%;">Gerichtstermin</span>
<span id="t93" class="t" style="top:721.00px;font-size:16px;line-height:24px;color:#0284c7;left:1123.52px;transform:scaleX(1.0243);transform-origin:0 50%;">MA-2026/0003</span>
<span id="t94" class="t" style="top:744.00px;font-size:14px;line-height:20px;color:#6b7280;left:1123.53px;transform:scaleX(1.0152);transform-origin:0 50%;">Müller, Maria</span>
<div class="badge" style="left:1320px;top:731px;width:66px;height:24px;background:#fee2e2"></div>
<span id="t95" class="t" style="top:736.00px;font-size:12px;line-height:16px;color:#991b1b;left:1327.57px;transform:scaleX(1.0340);transform-origin:0 50%;">Dringend</span>
<div class="badge" style="left:1464px;top:731px;width:46px;height:24px;background:#dbeafe"></div>
<span id="t96" class="t" style="top:736.00px;font-size:12px;line-height:16px;color:#1e40af;left:1472.17px;transform:scaleX(1.0631);transform-origin:0 50%;">Offen</span>
<a><span id="t97" class="t chk" style="top:731.00px;font-size:14px;line-height:20px;color:#16a34a;left:1654.70px;font-family:'Noto Sans CJK JP','DejaVu Sans',sans-serif;">✓</span> <span id="t98" class="t" style="top:732.00px;font-size:14px;line-height:20px;color:#16a34a;left:1668.34px;transform:scaleX(1.0087);transform-origin:0 50%;">Erledigt</span><div style="left:1654px;top:748px;width:62px;height:1px;background:#16a34a"></div></a>
<span id="t99" class="t" style="top:732.00px;font-size:14px;line-height:20px;color:#0284c7;left:1731.15px;">Bearbeiten</span>
<span id="t100" class="t" style="top:732.00px;font-size:14px;line-height:20px;color:#dc2626;left:1813.40px;transform:scaleX(0.9616);transform-origin:0 50%;">Löschen</span>
<span id="t101" class="t" style="top:807.00px;font-size:14px;line-height:20px;color:#111827;left:311.82px;transform:scaleX(0.9565);transform-origin:0 50%;">30.01.2026</span>
<span id="t102" class="t" style="top:833.00px;font-size:12px;line-height:16px;color:#6b7280;left:311.55px;transform:scaleX(0.9972);transform-origin:0 50%;">in 1 Tagen</span>
<div class="badge" style="left:484px;top:818px;width:93px;height:24px;background:#f3f4f6"></div>
<span id="t103" class="t" style="top:823.00px;font-size:12px;line-height:16px;color:#1f2937;left:492.50px;transform:scaleX(1.0033);transform-origin:0 50%;">Wiedervorlage</span>
<span id="t104" class="t" style="top:819.00px;font-size:14px;line-height:20px;color:#111827;left:664.10px;transform:scaleX(1.0032);transform-origin:0 50%;">Akteneinsicht beantragen</span>
<span id="t105" class="t" style="top:808.00px;font-size:16px;line-height:24px;color:#0284c7;left:1123.52px;transform:scaleX(1.0218);transform-origin:0 50%;">MA-2026/0004</span>
<span id="t106" class="t" style="top:831.00px;font-size:14px;line-height:20px;color:#6b7280;left:1123.56px;transform:scaleX(0.9904);transform-origin:0 50%;">Neumann, Max</span>
<div class="badge" style="left:1320px;top:818px;width:56px;height:24px;background:#f3f4f6"></div>
<span id="t107" class="t" style="top:823.00px;font-size:12px;line-height:16px;color:#1f2937;left:1327.55px;transform:scaleX(1.0541);transform-origin:0 50%;">Normal</span>
<div class="badge" style="left:1464px;top:818px;width:46px;height:24px;background:#dbeafe"></div>
<span id="t108" class="t" style="top:823.00px;font-size:12px;line-height:16px;color:#1e40af;left:1472.17px;transform:scaleX(1.0631);transform-origin:0 50%;">Offen</span>
<a><span id="t109" class="t chk" style="top:818.00px;font-size:14px;line-height:20px;color:#16a34a;left:1654.70px;font-family:'Noto Sans CJK JP','DejaVu Sans',sans-serif;">✓</span> <span id="t110" class="t" style="top:819.00px;font-size:14px;line-height:20px;color:#16a34a;left:1668.34px;transform:scaleX(1.0087);transform-origin:0 50%;">Erledigt</span><div style="left:1654px;top:835px;width:62px;height:1px;background:#16a34a"></div></a>
<span id="t111" class="t" style="top:819.00px;font-size:14px;line-height:20px;color:#0284c7;left:1731.15px;">Bearbeiten</span>
<span id="t112" class="t" style="top:819.00px;font-size:14px;line-height:20px;color:#dc2626;left:1813.40px;transform:scaleX(0.9616);transform-origin:0 50%;">Löschen</span></div></section></main>
<svg class="ic" style="left:1900px;top:1060px" width="20" height="20" viewBox="0 0 20 20" stroke="#858585" stroke-width="1.15" stroke-linecap="round" fill="none"><path d="M6.6 18.7 19 7M10.8 18.7 19 11M15 18.7 19 15"/></svg>
</div>
</body></html>
